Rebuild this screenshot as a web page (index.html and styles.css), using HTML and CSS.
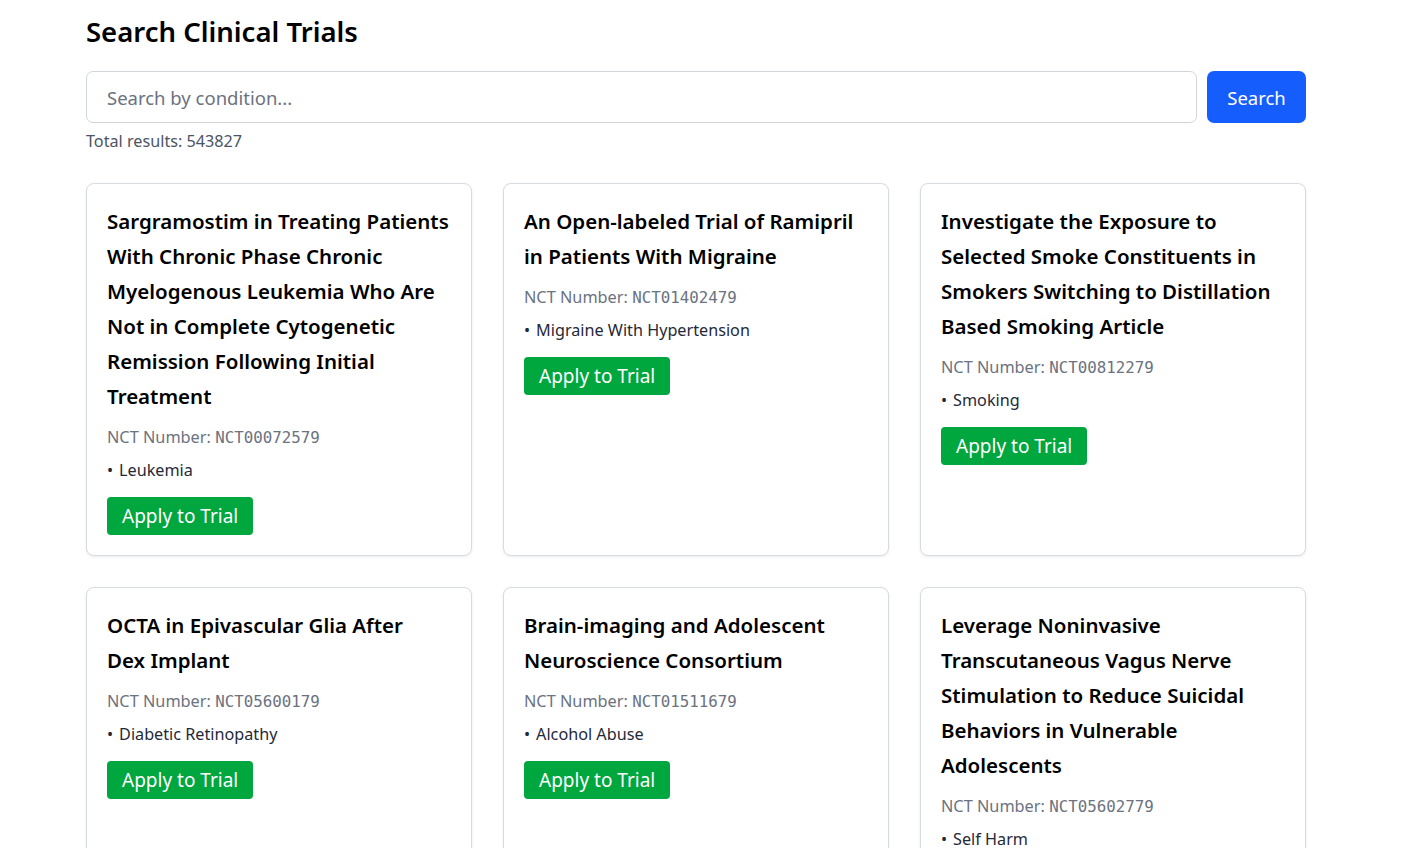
FILE: index.html
```html
<!DOCTYPE html>
<html lang="en">
<head>
<meta charset="utf-8">
<title>Search Clinical Trials</title>
<link rel="stylesheet" href="styles.css">
</head>
<body>
<main class="page">
  <h1 class="page-title">Search Clinical Trials</h1>
  <form class="search-row">
    <input class="search-input" type="text" placeholder="Search by condition...">
    <button class="btn btn-search" type="button">Search</button>
  </form>
  <p class="total">Total results: 543827</p>

  <section class="grid">
    <article class="card">
      <h2 class="card-title">Sargramostim in Treating Patients With Chronic Phase Chronic Myelogenous Leukemia Who Are Not in Complete Cytogenetic Remission Following Initial Treatment</h2>
      <p class="nct">NCT Number: <code>NCT00072579</code></p>
      <ul class="conditions"><li>Leukemia</li></ul>
      <button class="btn btn-apply" type="button">Apply to Trial</button>
    </article>
    <article class="card">
      <h2 class="card-title">An Open-labeled Trial of Ramipril in Patients With Migraine</h2>
      <p class="nct">NCT Number: <code>NCT01402479</code></p>
      <ul class="conditions"><li>Migraine With Hypertension</li></ul>
      <button class="btn btn-apply" type="button">Apply to Trial</button>
    </article>
    <article class="card">
      <h2 class="card-title">Investigate the Exposure to Selected Smoke Constituents in Smokers Switching to Distillation Based Smoking Article</h2>
      <p class="nct">NCT Number: <code>NCT00812279</code></p>
      <ul class="conditions"><li>Smoking</li></ul>
      <button class="btn btn-apply" type="button">Apply to Trial</button>
    </article>
    <article class="card">
      <h2 class="card-title">OCTA in Epivascular Glia After Dex&nbsp;Implant</h2>
      <p class="nct">NCT Number: <code>NCT05600179</code></p>
      <ul class="conditions"><li>Diabetic Retinopathy</li></ul>
      <button class="btn btn-apply" type="button">Apply to Trial</button>
    </article>
    <article class="card">
      <h2 class="card-title">Brain-imaging and Adolescent Neuroscience Consortium</h2>
      <p class="nct">NCT Number: <code>NCT01511679</code></p>
      <ul class="conditions"><li>Alcohol Abuse</li></ul>
      <button class="btn btn-apply" type="button">Apply to Trial</button>
    </article>
    <article class="card">
      <h2 class="card-title">Leverage Noninvasive Transcutaneous Vagus Nerve Stimulation to Reduce Suicidal Behaviors in Vulnerable Adolescents</h2>
      <p class="nct">NCT Number: <code>NCT05602779</code></p>
      <ul class="conditions"><li>Self Harm</li></ul>
      <button class="btn btn-apply" type="button">Apply to Trial</button>
    </article>
  </section>
</main>
</body>
</html>
```
FILE: styles.css
```css
* { box-sizing: border-box; }

html, body {
  margin: 0;
  background: #ffffff;
}

body {
  font-family: "Noto Sans", "Open Sans", Arial, sans-serif;
  color: #212529;
  font-size: 16px;
}

.page {
  width: 1220px;
  margin-left: 86px;
  padding-top: 15px;
  padding-bottom: 40px;
}

.page-title {
  margin: 0 0 22px;
  font-size: 27.5px;
  line-height: 34px;
  font-weight: 600;
  color: #000;
}

.search-row {
  display: flex;
  gap: 10px;
  margin: 0;
}

.search-input {
  flex: 1;
  height: 52px;
  padding: 0 20px;
  border: 1px solid #d1d5db;
  border-radius: 7px;
  font-family: inherit;
  font-size: 18.5px;
  color: #212529;
  outline: none;
}

.search-input::placeholder {
  color: #6b7280;
}

.btn {
  border: none;
  font-family: inherit;
  color: #fff;
  cursor: pointer;
}

.btn-search {
  width: 99px;
  height: 52px;
  background: #155dfc;
  border-radius: 7px;
  font-size: 18.5px;
}

.total {
  margin: 5px 0 29px;
  line-height: 26px;
  font-size: 16.2px;
  color: #4b5563;
}

.grid {
  display: grid;
  grid-template-columns: repeat(3, 1fr);
  column-gap: 31px;
  row-gap: 31px;
}

.card {
  border: 1px solid #d8dbe0;
  border-radius: 8px;
  padding: 20px;
  background: #fff;
  box-shadow: 0 1px 3px rgba(0, 0, 0, 0.08);
}

.card-title {
  margin: 0 0 10px;
  font-size: 20.5px;
  line-height: 35px;
  font-weight: 600;
  color: #000;
}

.nct {
  margin: 0 0 6px;
  line-height: 26px;
  font-size: 16.3px;
  color: #6b7280;
}

.nct code {
  font-family: "DejaVu Sans Mono", "Liberation Mono", monospace;
  font-size: 15.8px;
  color: #6b7280;
}

.conditions {
  list-style: none;
  margin: 0 0 14px;
  padding: 0;
  line-height: 26px;
  font-size: 16.2px;
  color: #1f2937;
}

.conditions li::before {
  content: "\2022";
  margin-right: 6px;
}

.btn-apply {
  height: 38px;
  padding: 0 15px;
  background: #00a63e;
  border-radius: 4px;
  font-size: 19px;
}
```
